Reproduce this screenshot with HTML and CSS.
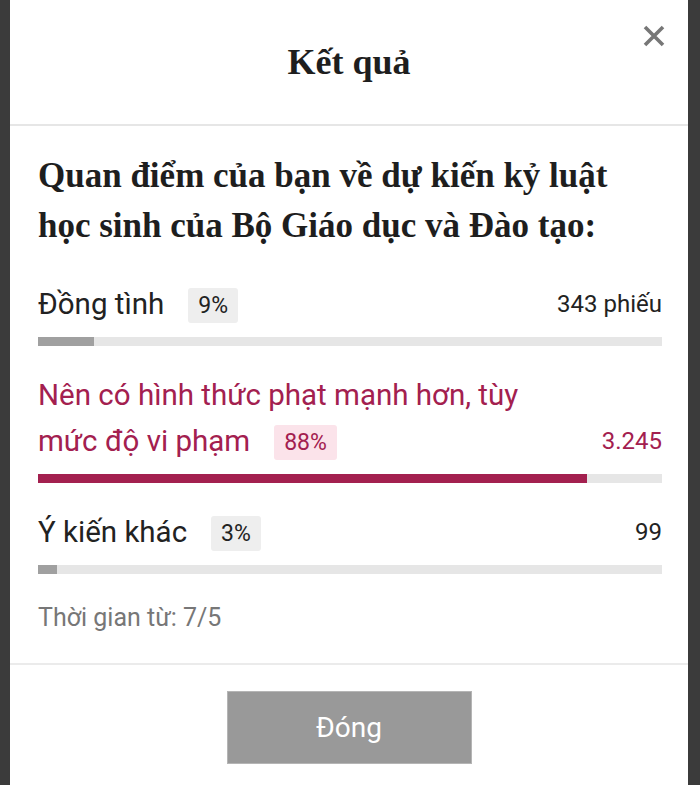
FILE: index.html
```html
<!DOCTYPE html>
<html lang="vi">
<head>
    <meta charset="UTF-8">
    <meta name="viewport" content="width=device-width, initial-scale=1.0">
    <title>Kết quả</title>
    <link rel="stylesheet" href="styles.css">
</head>
<body>
    <div class="modal">
        <div class="modal-header">
            <h1 class="title">Kết quả</h1>
            <button class="close-btn" aria-label="Đóng">
                <svg width="22" height="22" viewBox="0 0 22 22">
                    <path d="M2 2 L20 20 M20 2 L2 20" stroke="#777" stroke-width="3.6" stroke-linecap="butt"/>
                </svg>
            </button>
        </div>

        <div class="modal-body">
            <h2 class="question">Quan điểm của bạn về dự kiến kỷ luật học sinh của Bộ Giáo dục và Đào tạo:</h2>

            <div class="option">
                <div class="option-row">
                    <span class="label">Đồng tình<span class="pct">9%</span></span>
                    <span class="count">343 phiếu</span>
                </div>
                <div class="bar"><div class="fill" style="width: 9%"></div></div>
            </div>

            <div class="option selected">
                <div class="option-row">
                    <span class="label">Nên có hình thức phạt mạnh hơn, tùy mức độ vi phạm<span class="pct">88%</span></span>
                    <span class="count">3.245</span>
                </div>
                <div class="bar"><div class="fill" style="width: 88%"></div></div>
            </div>

            <div class="option">
                <div class="option-row">
                    <span class="label">Ý kiến khác<span class="pct">3%</span></span>
                    <span class="count">99</span>
                </div>
                <div class="bar"><div class="fill" style="width: 3%"></div></div>
            </div>

            <p class="time">Thời gian từ: 7/5</p>
        </div>

        <div class="modal-footer">
            <button class="done-btn">Đóng</button>
        </div>
    </div>
</body>
</html>
```

FILE: styles.css
```css
body {
    margin: 0;
    background-color: #3b3b3b;
}
.modal {
    margin: 0 12px 0 10px;
    min-height: 785px;
    background-color: white;
    font-family: Roboto, "Noto Sans", sans-serif;
    color: #222;
}
.modal-header {
    position: relative;
    height: 124px;
    display: flex;
    align-items: center;
    justify-content: center;
    border-bottom: 2px solid #e6e6e6;
}
.title {
    margin: 0;
    font-family: "Liberation Serif", serif;
    font-weight: bold;
    font-size: 36px;
    color: #1e1e1e;
}
.close-btn {
    position: absolute;
    top: 25px;
    right: 23px;
    padding: 0;
    border: none;
    background: none;
    width: 22px;
    height: 22px;
    line-height: 0;
}
.modal-body {
    padding: 25px 26px 0 28px;
    border-bottom: 2px solid #ebebeb;
}
.question {
    margin: 0 0 30px 0;
    font-family: "Liberation Serif", serif;
    font-weight: bold;
    font-size: 35px;
    line-height: 50px;
    color: #1e1e1e;
}
.option {
    margin-bottom: 26px;
}
.option-row {
    display: flex;
    align-items: flex-end;
    justify-content: space-between;
    gap: 20px;
}
.label {
    max-width: 505px;
    font-size: 29.5px;
    line-height: 46px;
}
.pct {
    display: inline-block;
    margin-left: 24px;
    padding: 6px 10px;
    font-size: 23px;
    line-height: 23px;
    vertical-align: 1px;
    background-color: #eeeeee;
    border-radius: 3px;
}
.count {
    font-size: 24px;
    line-height: 46px;
    white-space: nowrap;
}
.bar {
    margin-top: 10px;
    height: 9px;
    background-color: #e6e6e6;
}
.fill {
    height: 100%;
    background-color: #a0a0a0;
}
.selected .label,
.selected .count {
    color: #a3204f;
}
.selected .pct {
    color: #a3204f;
    background-color: #fbe3ea;
}
.selected .fill {
    background-color: #a3204f;
}
.time {
    margin: 0;
    padding: 3px 0 30px 0;
    font-size: 25px;
    line-height: 30px;
    color: #777;
}
.modal-footer {
    display: flex;
    justify-content: center;
    padding-top: 26px;
}
.done-btn {
    width: 245px;
    height: 73px;
    background-color: #999999;
    border: 1px solid #b5b5b5;
    color: white;
    font-family: Roboto, "Noto Sans", sans-serif;
    font-size: 28px;
}
```
